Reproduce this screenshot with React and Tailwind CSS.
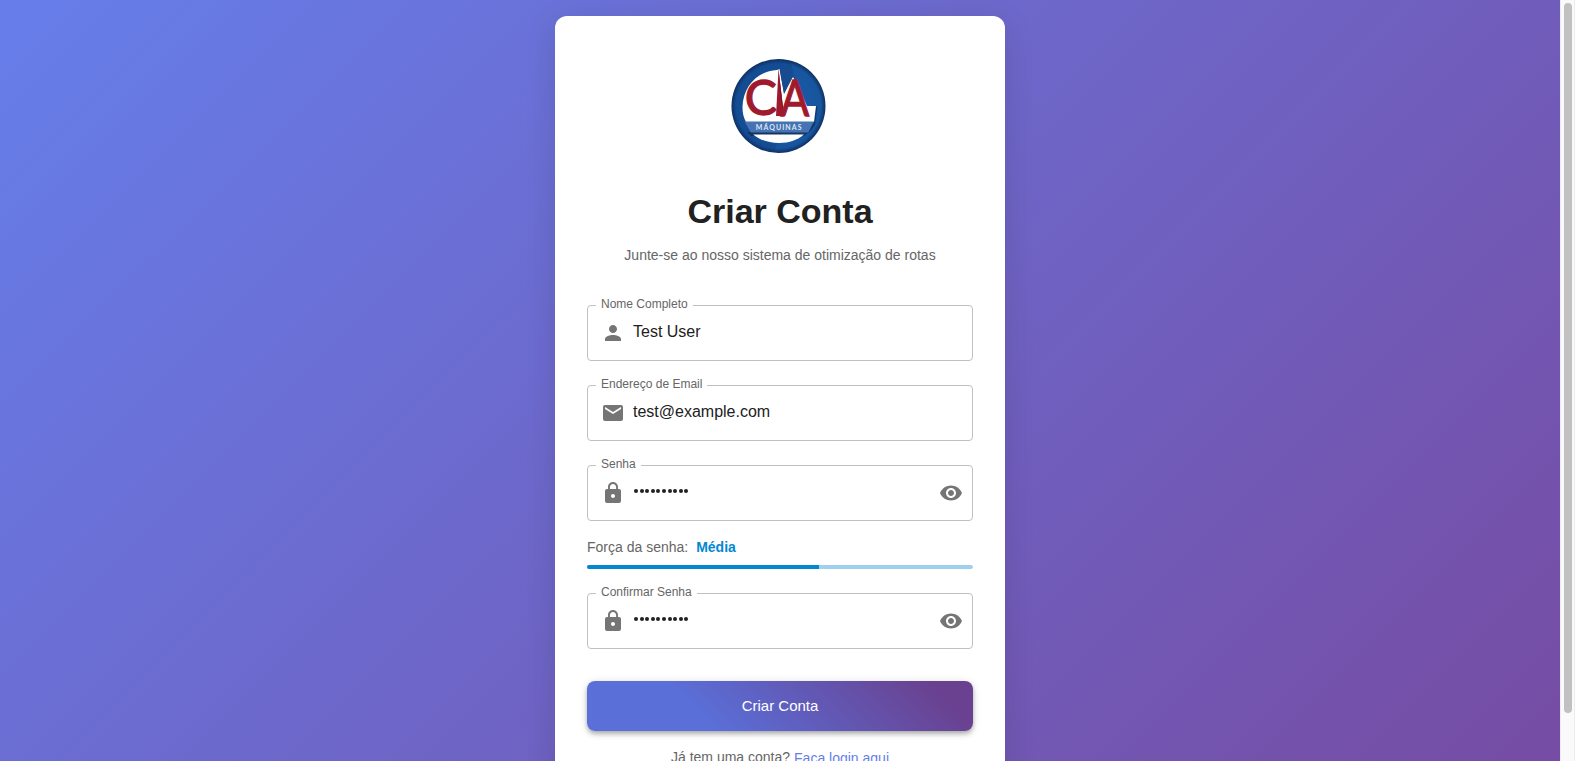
import React from 'react';

const PATHS = {
  person: 'M12 12c2.21 0 4-1.79 4-4s-1.79-4-4-4-4 1.79-4 4 1.79 4 4 4m0 2c-2.67 0-8 1.34-8 4v2h16v-2c0-2.66-5.33-4-8-4',
  email: 'M20 4H4c-1.1 0-1.99.9-1.99 2L2 18c0 1.1.9 2 2 2h16c1.1 0 2-.9 2-2V6c0-1.1-.9-2-2-2m0 4-8 5-8-5V6l8 5 8-5z',
  lock: 'M18 8h-1V6c0-2.76-2.24-5-5-5S7 3.24 7 6v2H6c-1.1 0-2 .9-2 2v10c0 1.1.9 2 2 2h12c1.1 0 2-.9 2-2V10c0-1.1-.9-2-2-2m-6 9c-1.1 0-2-.9-2-2s.9-2 2-2 2 .9 2 2-.9 2-2 2m3.1-9H8.9V6c0-1.71 1.39-3.1 3.1-3.1s3.1 1.39 3.1 3.1z',
  eye: 'M12 4.5C7 4.5 2.73 7.61 1 12c1.73 4.39 6 7.5 11 7.5s9.27-3.11 11-7.5c-1.73-4.39-6-7.5-11-7.5M12 17c-2.76 0-5-2.24-5-5s2.24-5 5-5 5 2.24 5 5-2.24 5-5 5m0-8c-1.66 0-3 1.34-3 3s1.34 3 3 3 3-1.34 3-3-1.34-3-3-3',
};

function Icon({ name }) {
  return (
    <svg viewBox="0 0 24 24" className="size-6 shrink-0 fill-[#757575]">
      <path d={PATHS[name]} />
    </svg>
  );
}

function Logo() {
  return (
    <svg viewBox="0 0 96 96" className="size-24">
      <defs>
        <radialGradient id="disc" cx="50%" cy="50%" r="50%">
          <stop offset="0" stopColor="#1c5ba6" />
          <stop offset="0.9" stopColor="#17559f" />
          <stop offset="1" stopColor="#0f2f5e" />
        </radialGradient>
      </defs>
      <circle cx="47.5" cy="48" r="47" fill="url(#disc)" />
      <path d="M47 2a46 46 0 0 0-29 82 44 44 0 0 0 25 9C60 60 66 30 60 3z" fill="#0b3774" opacity=".28" />
      <path d="M48 11l5 15 5 6-4 16zM85 48l1.500 1-2.500 18-6 8z" fill="#0a2449" opacity=".55" />
      <path d="M46 12C26 13 12 29 11.500 49c0 6 1 10 3.500 15h68l2-16H76L62 18.500 53 36 48.500 11z" fill="#fff" />
      <path d="M49 12l4 23 9-16.500 3 5L60 9z" fill="#174c91" />
      <path d="M16 74h62l-5 4H20z" fill="#14243d" opacity=".6" />
      <path d="M22 76.500h51c-7 5.500-14 8.500-25 8.500s-19-3-26-8.500" fill="#fff" />
      <path d="M13.500 63.500h69.500l-6 11H20z" fill="#4673b2" />
      {/* Mast between the two initials */}
      <path d="M47.500 11 45 58h8z" fill="#a01a2e" />
      <path d="M47.500 11l2 30L53 58z" fill="#7c1526" />
      <g className="font-['Lato',sans-serif]" fill="#a01a2e" stroke="#a01a2e">
        <text transform="translate(13.800 57)" fontSize="48" strokeWidth="1.300">C</text>
        <text transform="translate(49.400 57.500) scale(.83 1)" fontSize="51" strokeWidth="1.300">A</text>
      </g>
      <text x="48.2" y="72" textAnchor="middle" className="font-['Lato',sans-serif] text-[7px] font-bold tracking-[1.05px]" fill="#dbe7f5">MÁQUINAS</text>
    </svg>
  );
}

function Field({ label, icon, value, secret }) {
  return (
    <fieldset className="flex h-[61px] w-full rounded-[4px] border border-[#c0c0c0] pr-[9px] pl-[13px]">
      <legend className="-ml-[5px] h-[11px] px-[5px] text-[12px] leading-[9px] whitespace-nowrap text-[#666]">{label}</legend>
      <div className="flex h-[44px] w-full items-center pb-[1px]">
        <Icon name={icon} />
        {secret ? (
          <div className="mb-[3px] ml-2 flex flex-1 gap-[1.6px] pl-[1px]">
            {Array.from({ length: 10 }, (_, i) => (
              <span key={i} className="size-[4px] rounded-full bg-[#212121]" />
            ))}
          </div>
        ) : (
          <div className="mb-[3px] ml-2 flex-1 text-[16px] leading-[23px] text-[#212121]">{value}</div>
        )}
        {secret && <Icon name="eye" />}
      </div>
    </fieldset>
  );
}

export default function App() {
  return (
    <div className="flex h-[761px] w-[1575px] overflow-hidden font-['Liberation_Sans',Arial,sans-serif]">
      <main className="flex h-[809px] w-[1560px] shrink-0 justify-center bg-[linear-gradient(135deg,#667eea_0%,#764ba2_100%)] py-4">
        <section className="flex w-[450px] flex-col items-center rounded-xl bg-white px-8 pt-[42px] shadow-[0_8px_32px_rgba(0,0,0,0.12)]">
          <div className="-ml-[3px]"><Logo /></div>
          <h1 className="mt-[35px] text-[34px] leading-[44px] font-bold text-[#212121]">Criar Conta</h1>
          <p className="mt-[12px] text-[14px] leading-5 text-[#666]">Junte-se ao nosso sistema de otimização de rotas</p>
          <div className="mt-[35px] flex w-full flex-col gap-[19px]">
            <Field label="Nome Completo" icon="person" value="Test User" />
            <Field label="Endereço de Email" icon="email" value="test@example.com" />
            <Field label="Senha" icon="lock" secret />
          </div>
          <div className="mt-4 flex w-full gap-2 text-[14px] leading-5 text-[#666]">
            <span>Força da senha:</span>
            <span className="font-bold text-[#0288d1]">Média</span>
          </div>
          <div className="mt-2 mb-[19px] h-1 w-full shrink-0 overflow-hidden rounded-sm bg-[#9fd1ef]">
            <div className="h-full w-[60%] bg-[#0288d1]" />
          </div>
          <Field label="Confirmar Senha" icon="lock" secret />
          <button className="mt-8 h-[50px] w-full shrink-0 rounded-lg bg-[linear-gradient(45deg,#5a6fd8_30%,#6a4190_90%)] text-[15px] text-white shadow-[0_2px_4px_-1px_rgba(0,0,0,0.2),0_4px_5px_0_rgba(0,0,0,0.14),0_1px_10px_0_rgba(0,0,0,0.12)]">Criar Conta</button>
          <p className="mt-4 flex gap-1 text-[14px] leading-5 text-[#666]">
            <span>Já tem uma conta?</span>
            <a className="pt-px text-[#667eea] underline">Faça login aqui</a>
          </p>
        </section>
      </main>
      <aside className="h-full w-[15px] shrink-0 border-x border-[#ececec] bg-[#fafafa] pt-[3px] pl-[3px]">
        <div className="h-[710px] w-2 rounded-full bg-[#c1c1c1]" />
      </aside>
    </div>
  );
}
